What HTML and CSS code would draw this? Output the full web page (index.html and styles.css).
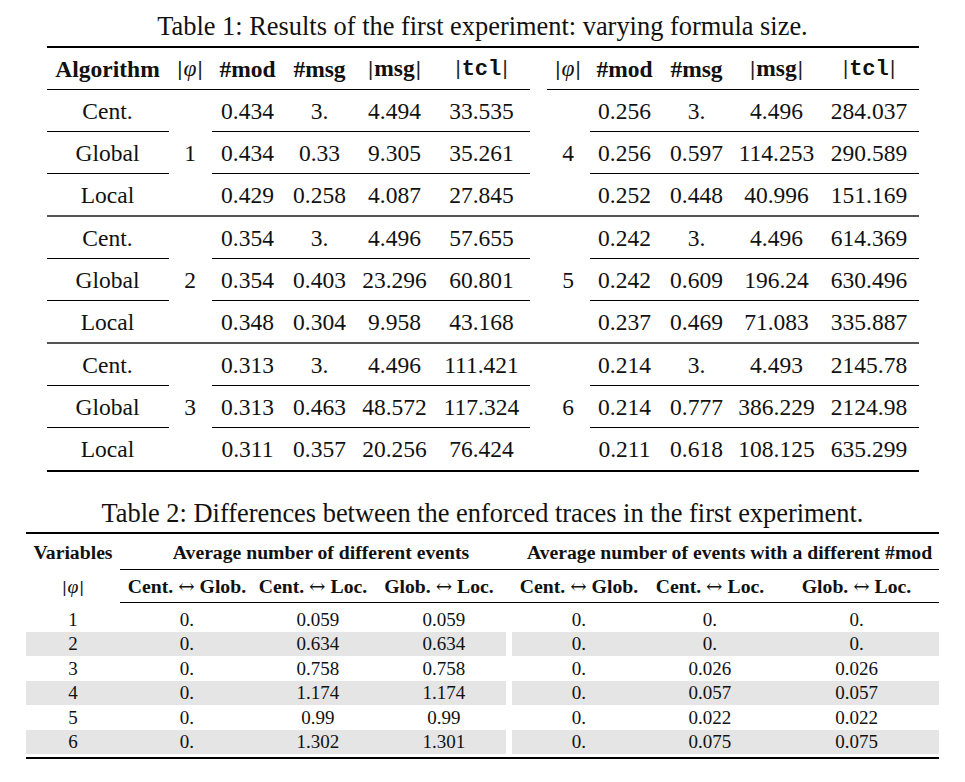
FILE: index.html
```html
<!DOCTYPE html>
<html lang="en">
<head>
<meta charset="utf-8">
<title>Tables</title>
<link rel="stylesheet" href="styles.css">
</head>
<body>
<main class="page">
  <div class="caption cap1">Table 1: Results of the first experiment: varying formula size.</div>
  <table class="t1">
    <colgroup>
      <col class="c-alg"><col class="c-phi"><col class="c-72"><col class="c-72"><col class="c-78"><col class="c-96">
      <col class="c-sp">
      <col class="c-phi"><col class="c-70"><col class="c-74"><col class="c-86"><col class="c-99">
    </colgroup>
    <thead>
      <tr>
        <th class="u">Algorithm</th>
        <th class="u"><span class="vb">|</span><span class="phi">φ</span><span class="vb">|</span></th>
        <th class="u">#mod</th>
        <th class="u">#msg</th>
        <th class="u"><span class="vb">|</span>msg<span class="vb">|</span></th>
        <th class="u"><span class="vb">|</span><span class="tt">tcl</span><span class="vb">|</span></th>
        <th class="sp"></th>
        <th class="u"><span class="vb">|</span><span class="phi">φ</span><span class="vb">|</span></th>
        <th class="u">#mod</th>
        <th class="u">#msg</th>
        <th class="u"><span class="vb">|</span>msg<span class="vb">|</span></th>
        <th class="u"><span class="vb">|</span><span class="tt">tcl</span><span class="vb">|</span></th>
      </tr>
    </thead>
    <tbody>
      <tr><td class="u">Cent.</td><td rowspan="3" class="m">1</td><td class="u">0.434</td><td class="u">3.</td><td class="u">4.494</td><td class="u">33.535</td><td class="sp"></td><td rowspan="3" class="m">4</td><td class="u">0.256</td><td class="u">3.</td><td class="u">4.496</td><td class="u">284.037</td></tr>
      <tr><td class="u">Global</td><td class="u">0.434</td><td class="u">0.33</td><td class="u">9.305</td><td class="u">35.261</td><td class="sp"></td><td class="u">0.256</td><td class="u">0.597</td><td class="u">114.253</td><td class="u">290.589</td></tr>
      <tr class="glast"><td class="m">Local</td><td class="m">0.429</td><td class="m">0.258</td><td class="m">4.087</td><td class="m">27.845</td><td class="m"></td><td class="m">0.252</td><td class="m">0.448</td><td class="m">40.996</td><td class="m">151.169</td></tr>

      <tr><td class="u">Cent.</td><td rowspan="3" class="m">2</td><td class="u">0.354</td><td class="u">3.</td><td class="u">4.496</td><td class="u">57.655</td><td class="sp"></td><td rowspan="3" class="m">5</td><td class="u">0.242</td><td class="u">3.</td><td class="u">4.496</td><td class="u">614.369</td></tr>
      <tr><td class="u">Global</td><td class="u">0.354</td><td class="u">0.403</td><td class="u">23.296</td><td class="u">60.801</td><td class="sp"></td><td class="u">0.242</td><td class="u">0.609</td><td class="u">196.24</td><td class="u">630.496</td></tr>
      <tr class="glast"><td class="m">Local</td><td class="m">0.348</td><td class="m">0.304</td><td class="m">9.958</td><td class="m">43.168</td><td class="m"></td><td class="m">0.237</td><td class="m">0.469</td><td class="m">71.083</td><td class="m">335.887</td></tr>

      <tr><td class="u">Cent.</td><td rowspan="3">3</td><td class="u">0.313</td><td class="u">3.</td><td class="u">4.496</td><td class="u">111.421</td><td class="sp"></td><td rowspan="3">6</td><td class="u">0.214</td><td class="u">3.</td><td class="u">4.493</td><td class="u">2145.78</td></tr>
      <tr><td class="u">Global</td><td class="u">0.313</td><td class="u">0.463</td><td class="u">48.572</td><td class="u">117.324</td><td class="sp"></td><td class="u">0.214</td><td class="u">0.777</td><td class="u">386.229</td><td class="u">2124.98</td></tr>
      <tr><td>Local</td><td>0.311</td><td>0.357</td><td>20.256</td><td>76.424</td><td></td><td>0.211</td><td>0.618</td><td>108.125</td><td>635.299</td></tr>
    </tbody>
  </table>

  <div class="caption cap2">Table 2: Differences between the enforced traces in the first experiment.</div>
  <table class="t2">
    <colgroup>
      <col class="d-var"><col class="d-134"><col class="d-118"><col class="d-134">
      <col class="d-gap">
      <col class="d-134"><col class="d-128"><col class="d-165">
    </colgroup>
    <thead>
      <tr class="h1">
        <th>Variables</th>
        <th colspan="3" class="u grp1">Average number of different events</th>
        <th class="u gap"></th>
        <th colspan="3" class="u grp2">Average number of events with a different #mod</th>
      </tr>
      <tr class="h2">
        <th class="nb"><span class="vb">|</span><span class="phi">φ</span><span class="vb">|</span></th>
        <th class="u">Cent. <span class="arr">↔</span> Glob.</th>
        <th class="u">Cent. <span class="arr">↔</span> Loc.</th>
        <th class="u">Glob. <span class="arr">↔</span> Loc.</th>
        <th class="u gap"></th>
        <th class="u">Cent. <span class="arr">↔</span> Glob.</th>
        <th class="u">Cent. <span class="arr">↔</span> Loc.</th>
        <th class="u">Glob. <span class="arr">↔</span> Loc.</th>
      </tr>
    </thead>
    <tbody>
      <tr class="first"><td>1</td><td>0.</td><td class="off">0.059</td><td class="off">0.059</td><td class="gap"></td><td>0.</td><td>0.</td><td>0.</td></tr>
      <tr class="shade"><td>2</td><td>0.</td><td class="off">0.634</td><td class="off">0.634</td><td class="gap"></td><td>0.</td><td>0.</td><td>0.</td></tr>
      <tr><td>3</td><td>0.</td><td class="off">0.758</td><td class="off">0.758</td><td class="gap"></td><td>0.</td><td>0.026</td><td>0.026</td></tr>
      <tr class="shade"><td>4</td><td>0.</td><td class="off">1.174</td><td class="off">1.174</td><td class="gap"></td><td>0.</td><td>0.057</td><td>0.057</td></tr>
      <tr><td>5</td><td>0.</td><td class="off">0.99</td><td class="off">0.99</td><td class="gap"></td><td>0.</td><td>0.022</td><td>0.022</td></tr>
      <tr class="shade"><td>6</td><td>0.</td><td class="off">1.302</td><td class="off">1.301</td><td class="gap"></td><td>0.</td><td>0.075</td><td>0.075</td></tr>
    </tbody>
  </table>
</main>
</body>
</html>
```

FILE: styles.css
```css
* { box-sizing: border-box; }

html, body {
  margin: 0;
  padding: 0;
  background: #ffffff;
}

body {
  font-family: "Liberation Serif", "Times New Roman", serif;
  color: #111111;
}

.page {
  width: 965px;
  display: flex;
  flex-direction: column;
  align-items: center;
}

.caption {
  font-size: 26.4px;
  line-height: 30px;
  white-space: nowrap;
}

.cap1 {
  padding-top: 11px;
  margin-bottom: 5px;
}

.cap2 {
  margin-top: 26px;
  margin-bottom: 4px;
}

/* shared glyph helpers */
.vb {
  font-weight: normal;
  font-family: "Liberation Sans", "DejaVu Sans", sans-serif;
  font-size: 0.85em;
  padding: 0 1px;
  color: #222;
}

.phi {
  font-style: italic;
  font-weight: normal;
}

.tt {
  font-family: "Liberation Mono", "Courier New", monospace;
  font-weight: bold;
  font-size: 0.94em;
}

.arr {
  font-weight: normal;
  font-family: "DejaVu Serif", "Liberation Serif", serif;
  font-size: 1em;
}

/* ---------- Table 1 ---------- */
.t1 {
  width: 872px;
  table-layout: fixed;
  border-collapse: separate;
  border-spacing: 0;
  border-top: 2px solid #000;
  border-bottom: 2px solid #000;
  font-size: 23.5px;
}

.t1 .c-alg { width: 122px; }
.t1 .c-phi { width: 43px; }
.t1 .c-72 { width: 72px; }
.t1 .c-78 { width: 78px; }
.t1 .c-96 { width: 96px; }
.t1 .c-sp { width: 17px; }
.t1 .c-70 { width: 70px; }
.t1 .c-74 { width: 74px; }
.t1 .c-86 { width: 86px; }
.t1 .c-99 { width: 99px; }

.t1 tr { height: 42px; }
.t1 tr.glast { height: 43px; }

.t1 th,
.t1 td {
  padding: 0;
  text-align: center;
  vertical-align: middle;
  white-space: nowrap;
  line-height: 26px;
}

.t1 th { font-weight: bold; }

.t1 .u { border-bottom: 1px solid #000; }
.t1 .m { border-bottom: 2px solid #555; }

/* ---------- Table 2 ---------- */
.t2 {
  width: 913px;
  table-layout: fixed;
  border-collapse: separate;
  border-spacing: 0;
  border-top: 2px solid #000;
  border-bottom: 2px solid #000;
  padding-bottom: 3px;
  font-size: 19px;
}

.t2 .d-var { width: 94px; }
.t2 .d-134 { width: 134px; }
.t2 .d-118 { width: 118px; }
.t2 .d-gap { width: 6px; }
.t2 .d-128 { width: 128px; }
.t2 .d-165 { width: 165px; }

.t2 th,
.t2 td {
  padding: 0;
  text-align: center;
  vertical-align: middle;
  white-space: nowrap;
  line-height: 22px;
}

.t2 th {
  font-weight: bold;
  font-size: 19.7px;
}

.t2 th.grp1 { padding-left: 16px; }
.t2 th.grp2 { padding-left: 8px; }

.t2 .u { border-bottom: 1px solid #000; }

.t2 tr.h1 { height: 36px; }
.t2 tr.h2 { height: 33px; }
.t2 tbody tr { height: 24.5px; }
.t2 tbody tr.first { height: 28.75px; }
.t2 tbody tr.first td { padding-top: 4.25px; }

.t2 td.off { padding-left: 10px; }

.t2 tr.shade td { background: #e5e5e5; }
.t2 tr.shade td.gap { background: #ffffff; }
```
